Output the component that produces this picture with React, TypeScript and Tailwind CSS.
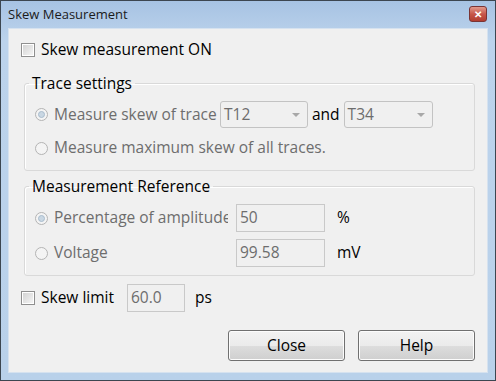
import type { ReactNode } from "react";

const FONT = { fontFamily: '"Open Sans", "Noto Sans", sans-serif' };

function CheckBox() {
  return (
    <span className="flex h-[14px] w-[14px] shrink-0 items-center justify-center border border-[#8f8f8f] bg-white">
      <span className="h-[10px] w-[10px] bg-gradient-to-br from-[#d4d4d4] to-[#f4f4f4]" />
    </span>
  );
}

function Radio({ on }: { on?: boolean }) {
  return (
    <span className="flex h-[13px] w-[13px] shrink-0 items-center justify-center rounded-full border border-[#b4b4b4] bg-[#f4f4f4]">
      {on && <span className="h-[7px] w-[7px] rounded-full border border-[#a9bccd] bg-[#c9d7e3]" />}
    </span>
  );
}

function Combo({ value, w }: { value: string; w: string }) {
  return (
    <div className={`flex h-[27px] ${w} items-center justify-between rounded-[3px] border border-[#c3c3c3] bg-[#f0f0f0] pl-[3px] pr-[7px] text-[#6d6d6d]`}>
      <span>{value}</span>
      <span className="h-0 w-0 border-x-[4px] border-t-[4px] border-x-transparent border-t-[#a8a8a8]" />
    </div>
  );
}

function Field({ value, w }: { value: string; w: string }) {
  return (
    <div className={`flex h-[28px] ${w} items-center border border-[#c9c9c9] bg-[#f0f0f0] px-[3px] text-[#6d6d6d]`}>
      {value}
    </div>
  );
}

function Group({ title, children, h }: { title: string; children: ReactNode; h: string }) {
  return (
    <fieldset className={`${h} ml-[15px] w-[451px] rounded-[3px] border border-[#d9d9d9] px-[10px] shadow-[inset_1px_1px_0_#fff]`}>
      <legend className="-ml-[6px] px-[3px] leading-[22px] text-black">{title}</legend>
      {children}
    </fieldset>
  );
}

function Button({ label }: { label: string }) {
  return (
    <button className="h-[31px] w-[117px] rounded-[3px] border border-[#707070] bg-[linear-gradient(#f2f2f2_0%,#ebebeb_50%,#dddddd_51%,#cfcfcf_100%)] text-black shadow-[inset_0_0_0_1px_#fcfcfc]">
      {label}
    </button>
  );
}

export default function App() {
  return (
    <div style={FONT} className="flex h-[381px] w-[496px] flex-col border border-[#3c4650] bg-[linear-gradient(#a7c3e3,#bcd3ec_40px,#b9d1ea)] text-[15.5px]">
      <div className="flex h-[27px] items-center justify-between pl-[7px] pr-[8px]">
        <span className="text-[13px] text-[#1b1b1b]">Skew Measurement</span>
        <span className="mt-[-2px] flex h-[16px] w-[18px] items-center justify-center rounded-[3px] border border-[#7a3434] bg-[linear-gradient(#e19a8c,#c7574a_50%,#b13d30)] text-[10px] font-bold leading-none text-white">
          ✕
        </span>
      </div>

      <div className="mx-[7px] mb-[7px] flex flex-1 flex-col border border-[#d6e2ef] bg-[#f0f0f0]">
        <div className="ml-[12px] mt-[9px] flex h-[24px] items-center gap-[6px] text-black">
          <CheckBox />
          <span>Skew measurement ON</span>
        </div>

        <div className="mt-[10px]">
          <Group title="Trace settings" h="h-[99px]">
            <div className="mt-[7px] flex h-[27px] items-center text-[#6d6d6d]">
              <Radio on />
              <span className="ml-[6px] w-[166px] whitespace-nowrap">Measure skew of trace</span>
              <Combo value="T12" w="w-[88px]" />
              <span className="mx-[4px] text-black">and</span>
              <Combo value="T34" w="w-[89px]" />
            </div>
            <div className="mt-[8px] flex h-[24px] items-center text-[#6d6d6d]">
              <Radio />
              <span className="ml-[6px]">Measure maximum skew of all traces.</span>
            </div>
          </Group>
        </div>

        <div className="mt-[4px]">
          <Group title="Measurement Reference" h="h-[101px]">
            <div className="mt-[7px] flex h-[28px] items-center text-[#6d6d6d]">
              <Radio on />
              <span className="ml-[6px] w-[174px] overflow-hidden whitespace-nowrap">Percentage of amplitude</span>
              <span className="ml-[8px]"><Field value="50" w="w-[89px]" /></span>
              <span className="ml-[12px] text-black">%</span>
            </div>
            <div className="mt-[7px] flex h-[28px] items-center text-[#6d6d6d]">
              <Radio />
              <span className="ml-[6px] w-[174px]">Voltage</span>
              <span className="ml-[8px]"><Field value="99.58" w="w-[89px]" /></span>
              <span className="ml-[12px] text-black">mV</span>
            </div>
          </Group>
        </div>

        <div className="ml-[12px] mt-[8px] flex h-[28px] items-center text-black">
          <CheckBox />
          <span className="ml-[6px] w-[86px]">Skew limit</span>
          <Field value="60.0" w="w-[58px]" />
          <span className="ml-[10px]">ps</span>
        </div>

        <div className="mr-[12px] mt-[18px] flex justify-end gap-[13px]">
          <Button label="Close" />
          <Button label="Help" />
        </div>
      </div>
    </div>
  );
}
